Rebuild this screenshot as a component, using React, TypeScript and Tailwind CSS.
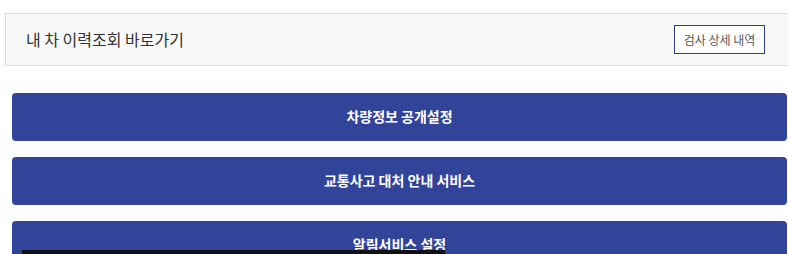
export default function App() {
  const font = { fontFamily: '"Noto Sans CJK KR", "Noto Sans", sans-serif' };
  const items = ["차량정보 공개설정", "교통사고 대처 안내 서비스", "알림서비스 설정"];
  return (
    <div className="relative h-[254px] w-[788px] overflow-hidden bg-white" style={font}>
      <div className="pt-[13px] pl-[5px]">
        <div className="flex h-[53px] w-[800px] items-center justify-between border border-[#dddddd] bg-[#f8f8f8] pl-5 pr-[39px]">
          <span className="pb-[2px] text-[16px] text-[#333333]">내 차 이력조회 바로가기</span>
          <button className="h-[29px] w-[91px] border border-[#2f3d94] bg-white text-[12px] text-[#555555]">
            검사 상세 내역
          </button>
        </div>
      </div>
      <div className="mt-[27px] ml-3 mr-[1px] flex flex-col gap-4">
        {items.map((t) => (
          <button
            key={t}
            className="h-12 w-full rounded-[4px] bg-[#32439a] pb-[2px] text-[14px] font-bold text-white"
          >
            {t}
          </button>
        ))}
      </div>
      <div className="absolute left-[22px] top-[250px] h-[4px] w-[423px] bg-[#111111]" />
    </div>
  );
}
